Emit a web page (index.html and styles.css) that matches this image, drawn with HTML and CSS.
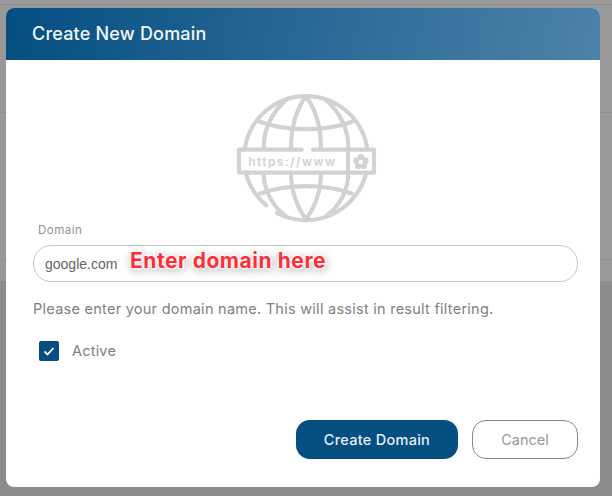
FILE: index.html
```html
<!DOCTYPE html>
<html lang="en">
<head>
<meta charset="utf-8">
<title>Create New Domain</title>
<link rel="stylesheet" href="styles.css">
</head>
<body>
<div class="backdrop">
  <div class="band band-a"></div>
  <div class="band band-b"></div>
  <div class="band band-c"></div>
  <div class="band band-d"></div>
</div>
<div class="modal">
  <header class="modal-head"><h1>Create New Domain</h1></header>
  <div class="modal-body">
    <svg class="globe" viewBox="0 0 570 417" width="190" height="139" aria-hidden="true">
      <g fill="none" stroke="#d2d2d2" stroke-width="12.5" stroke-linecap="round" stroke-linejoin="round">
        <path d="M105 186A186 186 0 0 1 471 186"/>
        <path d="M469 262A186 186 0 0 1 201 384"/>
        <path d="M169 361A186 186 0 0 1 107 262"/>
        <path d="M288 34C258 75 243 130 243 190M288 34C318 75 333 130 333 190"/>
        <path d="M243 264C243 320 261 365 288 403M333 264C333 320 315 365 288 403"/>
        <path d="M229 44C183 85 161 135 161 190M347 44C393 85 415 135 415 190"/>
        <path d="M161 264C161 315 188 365 229 394M415 264C415 315 388 365 347 394"/>
        <path d="M149 110C233 140 343 140 427 110"/>
        <path d="M149 326C233 296 343 296 427 326"/>
        <path d="M275 194H87V263H492V194H309"/>
        <path d="M414 194V263"/>
      </g>
      <text class="globe-text" x="115" y="243">https://www</text>
      <g fill="#d2d2d2">
        <circle cx="453" cy="217" r="10"/>
        <circle cx="466" cy="227" r="10"/>
        <circle cx="461" cy="242" r="10"/>
        <circle cx="445" cy="242" r="10"/>
        <circle cx="440" cy="227" r="10"/>
      </g>
      <circle cx="453" cy="231" r="7" fill="#fff"/>
    </svg>
    <label class="field-label" for="domain">Domain</label>
    <div class="field">
      <input class="field-input" id="domain" type="text" value="google.com">
      <span class="callout">Enter domain here</span>
    </div>
    <p class="help">Please enter your domain name. This will assist in result filtering.</p>
    <div class="check-row">
      <span class="check">
        <svg viewBox="0 0 20 20" width="20" height="20" aria-hidden="true"><path d="M5.5 10.5l3 3 6-6.5" fill="none" stroke="#fff" stroke-width="1.8"/></svg>
      </span>
      <span class="check-label">Active</span>
    </div>
    <div class="actions">
      <button class="btn btn-primary" type="button">Create Domain</button>
      <button class="btn btn-ghost" type="button">Cancel</button>
    </div>
  </div>
</div>
</body>
</html>
```
FILE: styles.css
```css
* { box-sizing: border-box; }
html, body { margin: 0; padding: 0; }
body {
  width: 612px;
  height: 496px;
  overflow: hidden;
  position: relative;
  font-family: Inter, "Open Sans", sans-serif;
  background: #999;
}
.backdrop { display: flex; flex-direction: column; height: 496px; }
.band { border-bottom: 1px solid #8f8f8f; }
.band-a { height: 5px; background: #9a9a9a; }
.band-b { height: 108px; background: #999; }
.band-c { height: 147px; background: #999; }
.band-d { flex: 1; background: #8c8c8c; border-bottom: 0; margin-top: 21px; }
.modal {
  position: absolute;
  left: 6px;
  top: 8px;
  width: 594px;
  height: 479px;
  background: #fff;
  border-radius: 8px;
  overflow: hidden;
  display: flex;
  flex-direction: column;
}
.modal-head {
  height: 52px;
  flex: none;
  padding-left: 26px;
  display: flex;
  align-items: center;
  background: linear-gradient(100deg, #044e82 0%, #4d82a9 100%);
}
.modal-head h1 {
  margin: 0;
  font-size: 18px;
  font-weight: 500;
  letter-spacing: 0.2px;
  color: #f4f7fa;
  line-height: 20px;
}
.modal-body {
  flex: 1;
  display: flex;
  flex-direction: column;
  padding: 25px 22px 28px 27px;
}
.globe { display: block; align-self: center; flex: none; margin-right: 1px; }
.globe-text {
  font-family: Inter, sans-serif;
  font-size: 36px;
  font-weight: 600;
  fill: #d2d2d2;
  letter-spacing: 4.2px;
}
.field-label {
  display: block;
  padding-left: 5px;
  font-size: 11.5px;
  line-height: 12px;
  color: #919191;
  letter-spacing: 0.5px;
}
.field { position: relative; margin-top: 9px; }
.field-input {
  display: block;
  width: 100%;
  height: 37px;
  border: 1px solid #c6c6c6;
  border-radius: 18px;
  padding: 0 11px;
  font-family: "Liberation Sans", Arial, sans-serif;
  font-size: 14px;
  color: #666;
  background: #fff;
  outline: none;
}
.callout {
  position: absolute;
  left: 97px;
  top: 3px;
  font-size: 21px;
  line-height: 26px;
  font-weight: 700;
  letter-spacing: 0.55px;
  color: #ff2d37;
  white-space: nowrap;
  text-shadow: 0 0 1px #fff, 0 0 2px #fff, 0 0 3px #fff, 0 0 3px #fff, 0 0 4px #fff, 1px 2px 8px rgba(0,0,0,.5);
}
.help {
  margin: 18px 0 0;
  font-size: 14.5px;
  line-height: 17px;
  letter-spacing: 0.26px;
  color: #808080;
  white-space: nowrap;
}
.check-row {
  display: flex;
  align-items: center;
  gap: 13px;
  margin: 24px 0 0 6px;
}
.check {
  width: 20px;
  height: 20px;
  background: #044e82;
  border-radius: 2px;
  display: block;
  flex: none;
}
.check svg { display: block; }
.check-label { font-size: 14.5px; line-height: 17px; padding-bottom: 2px; letter-spacing: 0.2px; color: #808080; }
.actions {
  margin-top: auto;
  display: flex;
  justify-content: flex-end;
  gap: 14px;
}
.btn {
  height: 39px;
  border-radius: 14px;
  font-family: inherit;
  font-size: 14.5px;
  font-weight: 500;
  padding: 0;
}
.btn-primary { width: 162px; background: #044e82; border: 0; color: #e9eff5; letter-spacing: 0.27px; }
.btn-ghost { width: 106px; background: #fff; border: 1px solid #888; color: #999; font-weight: 400; }
```
